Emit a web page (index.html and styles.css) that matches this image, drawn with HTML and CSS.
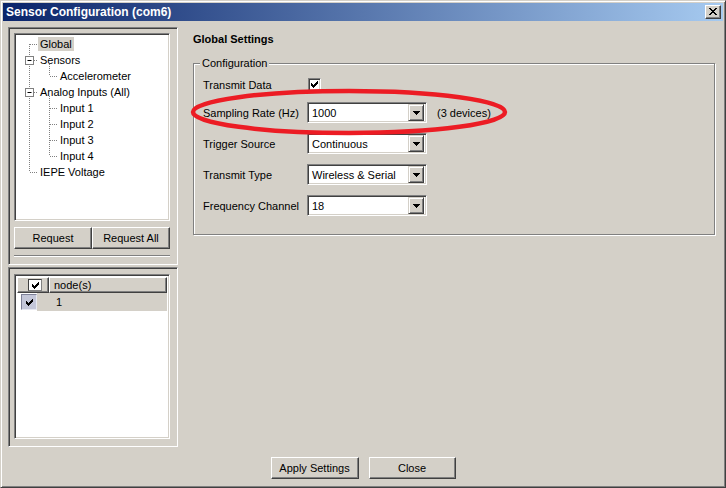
FILE: index.html
```html
<!DOCTYPE html>
<html>
<head>
<meta charset="utf-8">
<title>Sensor Configuration (com6)</title>
<link rel="stylesheet" href="styles.css">
</head>
<body>
<div class="window">
  <div class="titlebar">
    <span class="title">Sensor Configuration (com6)</span>
    <span class="close-btn">
      <svg width="8" height="7" viewBox="0 0 8 7"><path d="M0 0h2v1H0zM6 0h2v1H6zM1 1h2v1H1zM5 1h2v1H5zM2 2h4v1H2zM3 3h2v1H3zM2 4h4v1H2zM1 5h2v1H1zM5 5h2v1H5zM0 6h2v1H0zM6 6h2v1H6z" fill="#000"/></svg>
    </span>
  </div>

  <div class="main">
    <div class="sidebar">
      <div class="panel panel-tree">
        <div class="tree sunken">
          <!-- dotted connectors, drawn in tree coordinates -->
          <svg class="tree-lines" width="150" height="150">
            <g stroke="#808080" stroke-dasharray="1 1" fill="none">
              <path d="M12.5 8V136"/>
              <path d="M13 8.5H21M17 24.5H21M17 56.5H21M13 136.5H21"/>
              <path d="M32.5 28V40M33 40.5H41"/>
              <path d="M32.5 60V120M33 72.5H41M33 88.5H41M33 104.5H41M33 120.5H41"/>
            </g>
            <g stroke="#808080" fill="#fff">
              <rect x="8.5" y="20.5" width="8" height="8"/>
              <rect x="8.5" y="52.5" width="8" height="8"/>
            </g>
            <path d="M10.5 24.5H14.5M10.5 56.5H14.5" stroke="#000"/>
          </svg>
          <div class="node"><span class="label selected">Global</span></div>
          <div class="node"><span class="label">Sensors</span></div>
          <div class="node child"><span class="label">Accelerometer</span></div>
          <div class="node"><span class="label">Analog Inputs (All)</span></div>
          <div class="node child"><span class="label">Input 1</span></div>
          <div class="node child"><span class="label">Input 2</span></div>
          <div class="node child"><span class="label">Input 3</span></div>
          <div class="node child"><span class="label">Input 4</span></div>
          <div class="node"><span class="label">IEPE Voltage</span></div>
        </div>
        <div class="tree-buttons">
          <span class="btn">Request</span>
          <span class="btn">Request All</span>
        </div>
        <div class="separator"></div>
      </div>

      <div class="panel panel-nodes">
        <div class="list sunken">
          <div class="list-header">
            <div class="hcell hcell-check">
              <span class="checkbox">
                <svg width="7" height="7" viewBox="0 0 7 7"><path d="M6 0h1v1H6zM5 1h2v1H5zM0 2h1v1H0zM4 2h3v1H4zM0 3h2v1H0zM3 3h3v1H3zM0 4h5v1H0zM1 5h3v1H1zM2 6h1v1H2z" fill="#000"/></svg>
              </span>
            </div>
            <div class="hcell hcell-name">node(s)</div>
          </div>
          <div class="list-row">
            <span class="row-check">
              <svg width="7" height="7" viewBox="0 0 7 7"><path d="M6 0h1v1H6zM5 1h2v1H5zM0 2h1v1H0zM4 2h3v1H4zM0 3h2v1H0zM3 3h3v1H3zM0 4h5v1H0zM1 5h3v1H1zM2 6h1v1H2z" fill="#000"/></svg>
            </span>
            <span class="row-id">1</span>
          </div>
        </div>
      </div>
    </div>

    <div class="settings">
      <h1>Global Settings</h1>
      <fieldset class="group">
        <legend>Configuration</legend>
        <div class="field field-first">
          <span class="field-label">Transmit Data</span>
          <span class="checkbox">
            <svg width="7" height="7" viewBox="0 0 7 7"><path d="M6 0h1v1H6zM5 1h2v1H5zM0 2h1v1H0zM4 2h3v1H4zM0 3h2v1H0zM3 3h3v1H3zM0 4h5v1H0zM1 5h3v1H1zM2 6h1v1H2z" fill="#000"/></svg>
          </span>
        </div>
        <div class="field">
          <span class="field-label">Sampling Rate (Hz)</span>
          <span class="combo sunken"><span class="combo-value">1000</span><span class="drop"><svg width="7" height="4" viewBox="0 0 7 4"><path d="M0 0h7v1H0zM1 1h5v1H1zM2 2h3v1H2zM3 3h1v1H3z" fill="#000"/></svg></span></span>
          <span class="note">(3 devices)</span>
        </div>
        <div class="field">
          <span class="field-label">Trigger Source</span>
          <span class="combo sunken"><span class="combo-value">Continuous</span><span class="drop"><svg width="7" height="4" viewBox="0 0 7 4"><path d="M0 0h7v1H0zM1 1h5v1H1zM2 2h3v1H2zM3 3h1v1H3z" fill="#000"/></svg></span></span>
        </div>
        <div class="field">
          <span class="field-label">Transmit Type</span>
          <span class="combo sunken"><span class="combo-value">Wireless &amp; Serial</span><span class="drop"><svg width="7" height="4" viewBox="0 0 7 4"><path d="M0 0h7v1H0zM1 1h5v1H1zM2 2h3v1H2zM3 3h1v1H3z" fill="#000"/></svg></span></span>
        </div>
        <div class="field">
          <span class="field-label">Frequency Channel</span>
          <span class="combo sunken"><span class="combo-value">18</span><span class="drop"><svg width="7" height="4" viewBox="0 0 7 4"><path d="M0 0h7v1H0zM1 1h5v1H1zM2 2h3v1H2zM3 3h1v1H3z" fill="#000"/></svg></span></span>
        </div>
      </fieldset>
    </div>
  </div>

  <div class="footer">
    <span class="btn btn-apply">Apply Settings</span>
    <span class="btn btn-close">Close</span>
  </div>

  <!-- hand-drawn highlight round the sampling rate row -->
  <svg class="highlight" width="330" height="54">
    <ellipse cx="163" cy="26" rx="156" ry="21" fill="none" stroke="#ec1c24" stroke-width="4.5"/>
  </svg>
</div>
</body>
</html>
```

FILE: styles.css
```css
body {
  margin: 0;
  font-family: "Liberation Sans", Arial, sans-serif;
  font-size: 11px;
  color: #000;
  background: #d4d0c8;
}
.window {
  position: relative;
  width: 726px;
  height: 488px;
  box-sizing: border-box;
  display: flex;
  flex-direction: column;
  padding: 2px;
  background: #d4d0c8;
  border: 1px solid;
  border-color: #d4d0c8 #404040 #404040 #d4d0c8;
  box-shadow: inset 1px 1px #fff, inset -1px -1px #808080;
  overflow: hidden;
}
.titlebar {
  height: 18px;
  flex: none;
  display: flex;
  align-items: center;
  padding: 0 2px 0 3px;
  background: linear-gradient(to right, #0a246a, #a6caf0);
}
.title {
  flex: 1;
  color: #fff;
  font-weight: bold;
  font-size: 12px;
  line-height: 18px;
}
.close-btn {
  width: 16px;
  height: 14px;
  box-sizing: border-box;
  display: flex;
  padding: 2px 0 0 3px;
  background: #d4d0c8;
  border: 1px solid;
  border-color: #fff #404040 #404040 #fff;
  box-shadow: inset -1px -1px #808080;
}
.close-btn svg { display: block; }

/* bevels */
.sunken {
  box-sizing: border-box;
  border: 1px solid;
  border-color: #808080 #fff #fff #808080;
  box-shadow: inset 1px 1px #404040, inset -1px -1px #d4d0c8;
}
.btn {
  box-sizing: border-box;
  display: flex;
  align-items: center;
  justify-content: center;
  height: 22px;
  background: #d4d0c8;
  border: 1px solid;
  border-color: #fff #404040 #404040 #fff;
  box-shadow: inset -1px -1px #808080;
}

.main {
  flex: 1;
  display: flex;
  padding: 6px 0 0 5px;
  min-height: 0;
}
.sidebar {
  width: 170px;
  flex: none;
  display: flex;
  flex-direction: column;
}
.panel {
  box-sizing: border-box;
  border: 1px solid;
  border-color: #808080 #fff #fff #808080;
  box-shadow: inset 1px 1px #404040, inset -1px -1px #d4d0c8;
  padding: 6px 4px 5px 5px;
}
.panel-tree {
  height: 238px;
  padding-top: 5px;
}
.tree {
  position: relative;
  width: 156px;
  height: 188px;
  background: #fff;
  padding: 2px;
}
.tree-lines {
  position: absolute;
  left: 2px;
  top: 2px;
}
.node {
  position: relative;
  height: 16px;
  display: flex;
  align-items: center;
  padding-left: 21px;
}
.node.child { padding-left: 41px; }
.label {
  padding: 0 2px;
  line-height: 14px;
}
.label.selected { background: #d4d0c8; }
.tree-buttons {
  display: flex;
  margin-top: 6px;
  width: 156px;
}
.tree-buttons .btn { width: 78px; }
.separator {
  margin-top: 6px;
  width: 156px;
  height: 1px;
  background: #808080;
  border-bottom: 1px solid #fff;
}
.panel-nodes {
  margin-top: 2px;
  height: 180px;
}
.list {
  width: 156px;
  height: 165px;
  background: #fff;
  padding: 2px;
}
.list-header {
  display: flex;
  height: 16px;
}
.hcell {
  box-sizing: border-box;
  height: 16px;
  display: flex;
  align-items: center;
  background: #d4d0c8;
  border: 1px solid;
  border-color: #fff #404040 #404040 #fff;
  box-shadow: inset -1px -1px #808080;
}
.hcell-check {
  width: 32px;
  padding-left: 10px;
}
.hcell-name {
  flex: 1;
  padding-left: 4px;
}
.checkbox {
  box-sizing: border-box;
  width: 13px;
  height: 13px;
  flex: none;
  display: flex;
  align-items: center;
  justify-content: center;
  background: #fff;
  border: 1px solid;
  border-color: #808080 #fff #fff #808080;
  box-shadow: inset 1px 1px #404040, inset -1px -1px #d4d0c8;
}
.hcell .checkbox {
  width: 14px;
  height: 12px;
  box-shadow: none;
  border-color: #404040 #808080 #808080 #404040;
}
.list-row {
  display: flex;
  align-items: center;
  height: 18px;
  padding-left: 4px;
}
.row-check {
  box-sizing: border-box;
  width: 16px;
  height: 16px;
  display: flex;
  align-items: center;
  justify-content: center;
  background: #c3c6d8;
  border: 1px solid;
  border-color: #7d8097 #e6e8f0 #e6e8f0 #7d8097;
}
.row-id {
  flex: 1;
  align-self: stretch;
  display: flex;
  align-items: center;
  padding-left: 19px;
  background: #d4d0c8;
}

.settings {
  flex: 1;
  min-width: 0;
  margin: 0 8px 0 15px;
}
h1 {
  margin: 5px 0 0;
  font-size: 11px;
  line-height: 14px;
  font-weight: bold;
}
.group {
  margin: 10px 0 0;
  min-width: 0;
  padding: 4px 8px 18px 9px;
  border: 1px solid #808080;
  box-shadow: inset 1px 1px #fff, 1px 1px #fff;
}
.group legend {
  padding: 0 2px;
  margin-left: -3px;
  line-height: 14px;
  background: #d4d0c8;
}
.field {
  display: flex;
  align-items: center;
  height: 21px;
  margin-top: 10px;
}
.field-first {
  margin-top: 0;
  margin-bottom: -3px;
}
.field-label {
  width: 104px;
  flex: none;
}
.field-first .checkbox { margin-left: 1px; }
.combo {
  width: 120px;
  height: 21px;
  display: flex;
  align-items: center;
  background: #fff;
  padding: 2px;
}
.combo-value {
  flex: 1;
  padding-left: 2px;
}
.drop {
  box-sizing: border-box;
  width: 16px;
  height: 17px;
  display: flex;
  align-items: center;
  justify-content: center;
  padding-left: 1px;
  background: #d4d0c8;
  border: 1px solid;
  border-color: #d4d0c8 #404040 #404040 #d4d0c8;
  box-shadow: inset 1px 1px #fff, inset -1px -1px #808080;
}
.note { margin-left: 10px; }

.footer {
  height: 28px;
  flex: none;
  display: flex;
  justify-content: center;
  gap: 10px;
}
.btn-apply { width: 88px; }
.btn-close { width: 87px; }

.highlight {
  position: absolute;
  left: 185px;
  top: 85px;
}
```
